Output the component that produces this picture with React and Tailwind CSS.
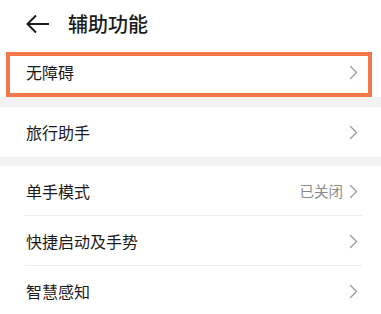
import React from "react";

const font = { fontFamily: '"Noto Sans CJK SC", "Noto Sans", sans-serif' };

function Chevron() {
  return (
    <svg width="9" height="15" viewBox="0 0 9 15" className="shrink-0">
      <polyline points="1.5,1.5 7.5,7.5 1.5,13.5" fill="none" stroke="#9a9a9a" strokeWidth="1.4" strokeLinejoin="round" strokeLinecap="round" />
    </svg>
  );
}

function Row({ label, value, divider }) {
  return (
    <div className="relative flex h-[50px] items-center pl-[26px] pr-[23px]">
      <span className="flex-1 text-[16px] text-[#1b1b1b]">{label}</span>
      {value && <span className="mr-[6px] text-[14.5px] text-[#8a8a8a]">{value}</span>}
      <Chevron />
      {divider && <div className="absolute bottom-0 left-[25px] right-[19px] h-px bg-[#ececec]" />}
    </div>
  );
}

export default function App() {
  return (
    <div className="w-[381px] h-[314px] overflow-hidden bg-white" style={font}>
      <div className="flex h-[47px] items-center pl-[26px]">
        <svg width="24" height="20" viewBox="0 0 24 20">
          <polyline points="10,1.5 1.5,10 10,18.5" fill="none" stroke="#1b1b1b" strokeWidth="2" strokeLinejoin="miter" />
          <line x1="1.5" y1="10" x2="23" y2="10" stroke="#1b1b1b" strokeWidth="2" />
        </svg>
        <span className="ml-[18px] text-[20px] font-medium text-[#1b1b1b]">辅助功能</span>
      </div>
      <div className="relative">
        <Row label="无障碍" />
        <div className="pointer-events-none absolute left-[6px] right-[9px] top-[5px] bottom-0 border-4 border-[#f4774a]" />
      </div>
      <div className="h-[10px] bg-[#f2f2f2]" />
      <Row label="旅行助手" />
      <div className="h-[9px] bg-[#f2f2f2]" />
      <Row label="单手模式" value="已关闭" divider />
      <Row label="快捷启动及手势" divider />
      <Row label="智慧感知" />
    </div>
  );
}
